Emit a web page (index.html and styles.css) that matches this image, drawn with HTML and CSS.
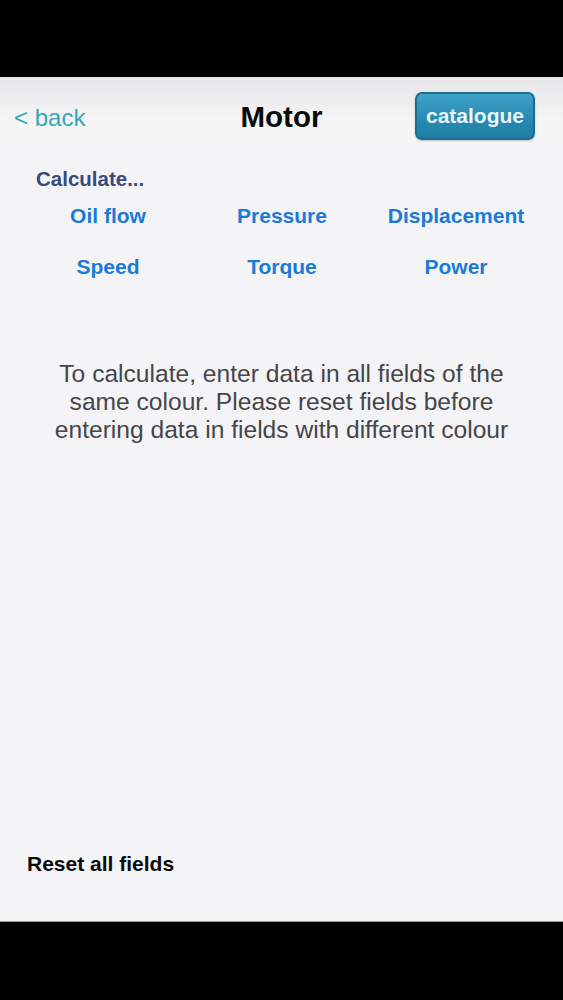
FILE: index.html
```html
<!DOCTYPE html>
<html>
<head>
<meta charset="utf-8">
<link rel="stylesheet" href="styles.css">
</head>
<body>
<div class="topbar"></div>
<div class="screen">
  <header class="navbar">
    <span class="back">&lt; back</span>
    <h1 class="title">Motor</h1>
    <span class="catalogue">catalogue</span>
  </header>
  <div class="calc-label">Calculate...</div>
  <div class="options">
    <span class="opt">Oil flow</span>
    <span class="opt">Pressure</span>
    <span class="opt">Displacement</span>
    <span class="opt">Speed</span>
    <span class="opt">Torque</span>
    <span class="opt">Power</span>
  </div>
  <p class="info">To calculate, enter data in all fields of the same colour. Please reset fields before entering data in fields with different colour</p>
  <div class="spacer"></div>
  <div class="reset">Reset all fields</div>
</div>
<div class="bottombar"></div>
</body>
</html>
```
FILE: styles.css
```css
html, body {
  margin: 0;
  padding: 0;
  background: #000;
  font-family: "Liberation Sans", Arial, sans-serif;
}
body {
  width: 563px;
  height: 1000px;
  display: flex;
  flex-direction: column;
  overflow: hidden;
}
.topbar {
  height: 77px;
  background: #000;
  flex: none;
}
.screen {
  height: 844px;
  flex: none;
  background: #f4f3f6;
  display: flex;
  flex-direction: column;
  border-bottom: 1px solid #9a9a9c;
}
.navbar {
  height: 80px;
  display: flex;
  align-items: center;
  justify-content: space-between;
  padding: 0 28px 0 14px;
  background: linear-gradient(#e6e6e8, #f6f6f7 60%, #f4f3f6);
  position: relative;
}
.back {
  color: #39a6bd;
  font-size: 24px;
  margin-top: 2px;
}
.title {
  position: absolute;
  left: 0;
  right: 0;
  text-align: center;
  margin: 0;
  font-size: 29.5px;
  font-weight: bold;
  color: #0a0a0a;
  pointer-events: none;
}
.catalogue {
  width: 120px;
  height: 48px;
  box-sizing: border-box;
  border: 2px solid #1c6c8c;
  border-radius: 7px;
  background: linear-gradient(#3fa2c9, #2a8db5 50%, #1f7ea6);
  color: #eaf5f9;
  font-weight: bold;
  font-size: 21px;
  display: flex;
  align-items: center;
  justify-content: center;
  box-shadow: 0 1px 2px rgba(0,0,0,0.25);
  margin-top: -2px;
}
.calc-label {
  margin: 10px 0 0 36px;
  font-size: 20.5px;
  font-weight: bold;
  color: #394b7a;
}
.options {
  display: grid;
  grid-template-columns: repeat(3, 174px);
  padding: 0 20px 0 21px;
  row-gap: 27px;
  margin-top: 13px;
}
.opt {
  text-align: center;
  font-size: 21px;
  font-weight: bold;
  color: #1b7ad6;
}
.info {
  margin: 81px 48px 0;
  text-align: center;
  font-size: 24.6px;
  line-height: 28px;
  color: #464548;
}
.spacer {
  flex: 1;
}
.reset {
  margin: 0 0 45px 27px;
  font-size: 21px;
  font-weight: bold;
  color: #0a0a0a;
}
.bottombar {
  flex: 1;
  background: #000;
}
```
